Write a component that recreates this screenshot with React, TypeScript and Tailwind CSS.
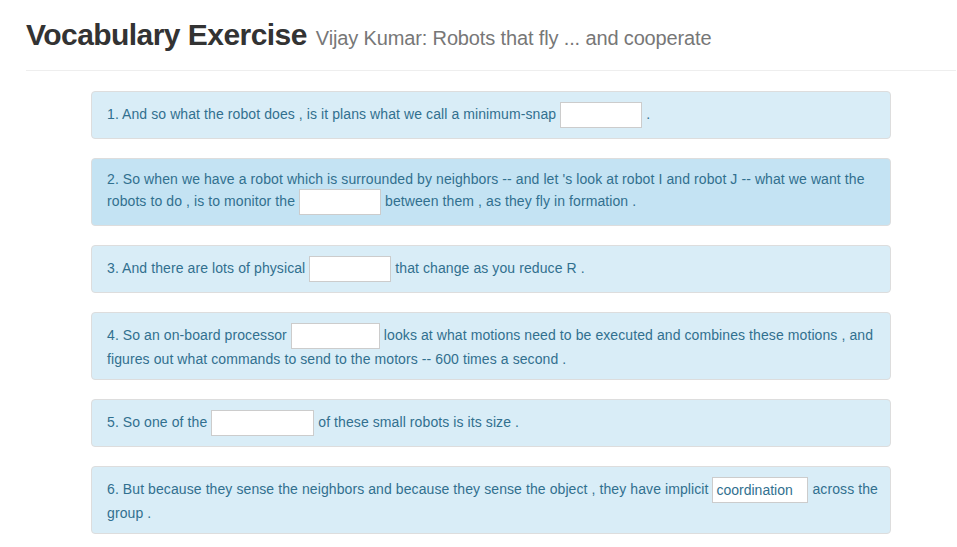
import React from "react";

type Part = string | { w: number; v?: string } | "BR";

const items: Part[][] = [
  ["1. And so what the robot does , is it plans what we call a minimum-snap ", { w: 82 }, " ."],
  [
    "2. So when we have a robot which is surrounded by neighbors -- and let 's look at robot I and robot J -- what we want the",
    "BR",
    "robots to do , is to monitor the ",
    { w: 82 },
    " between them , as they fly in formation .",
  ],
  ["3. And there are lots of physical ", { w: 82 }, " that change as you reduce R ."],
  [
    "4. So an on-board processor ",
    { w: 89 },
    " looks at what motions need to be executed and combines these motions , and",
    "BR",
    "figures out what commands to send to the motors -- 600 times a second .",
  ],
  ["5. So one of the ", { w: 103 }, " of these small robots is its size ."],
  [
    "6. But because they sense the neighbors and because they sense the object , they have implicit ",
    { w: 96, v: "coordination" },
    " across the",
    "BR",
    "group .",
  ],
];

export default function App() {
  return (
    <div
      className="min-h-[547px] bg-white pl-[26px] pr-px"
      style={{ fontFamily: '"Liberation Sans", Arial, Helvetica, sans-serif' }}
    >
      <div className="pt-[18px] pb-[19px] border-b border-[#eeeeee]">
        <h1 className="flex items-baseline gap-[9px] text-[#333333]">
          <span className="text-[30px] leading-[33px] font-bold tracking-[-0.55px]">Vocabulary Exercise</span>
          <span className="text-[20px] leading-[20px] text-[#777777] tracking-[-0.14px]">
            Vijay Kumar: Robots that fly ... and cooperate
          </span>
        </h1>
      </div>
      <div className="mt-[20px] ml-[65px] w-[800px] flex flex-col gap-[19px]">
        {items.map((parts, i) => (
          <div
            key={i}
            className={
              "border border-[#dddddd] rounded-[4px] pl-[15px] pr-[4px] py-[10px] text-[14px] leading-[20px] tracking-[0.09px] text-[#31708f] " +
              (i === 1 ? "bg-[#c4e3f3]" : "bg-[#d9edf7]")
            }
          >
            {parts.map((p, j) =>
              p === "BR" ? (
                <br key={j} />
              ) : typeof p === "string" ? (
                <React.Fragment key={j}>{p}</React.Fragment>
              ) : (
                <input
                  key={j}
                  type="text"
                  defaultValue={p.v ?? ""}
                  style={{ width: p.w }}
                  className="inline-block align-middle h-[26px] border border-[#cccccc] bg-white px-[3px] text-[14px] tracking-normal text-[#31708f] outline-none"
                />
              )
            )}
          </div>
        ))}
      </div>
    </div>
  );
}
